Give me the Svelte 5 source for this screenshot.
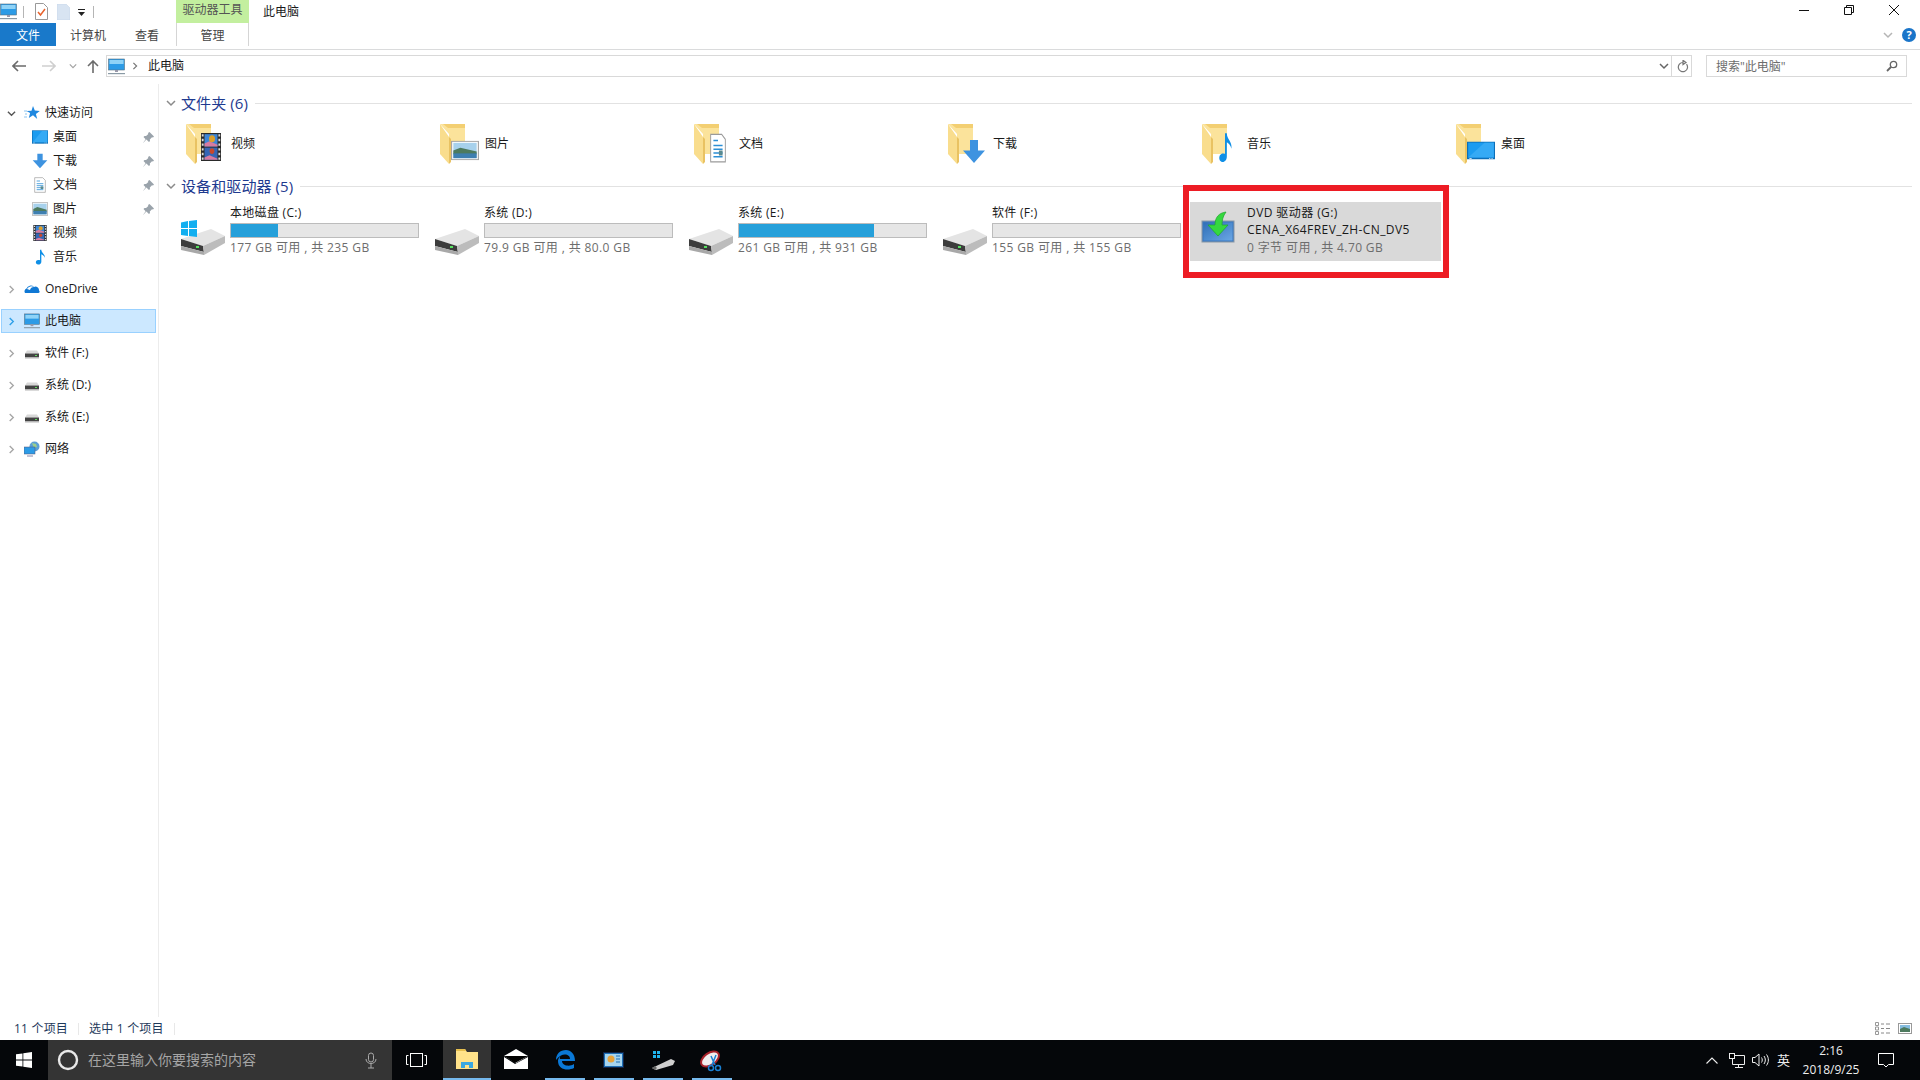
<script>
  const quick = [
    { name: '桌面', kind: 'desktop', pin: true },
    { name: '下载', kind: 'down', pin: true },
    { name: '文档', kind: 'doc', pin: true },
    { name: '图片', kind: 'pic', pin: true },
    { name: '视频', kind: 'film', pin: false },
    { name: '音乐', kind: 'note', pin: false }
  ];
  const folders = [
    { name: '视频', kind: 'film' },
    { name: '图片', kind: 'pic' },
    { name: '文档', kind: 'doc' },
    { name: '下载', kind: 'down' },
    { name: '音乐', kind: 'note' },
    { name: '桌面', kind: 'desktop' }
  ];
  const drives = [
    { name: '本地磁盘 (C:)', stat: '177 GB 可用 , 共 235 GB', used: 25, win: true },
    { name: '系统 (D:)', stat: '79.9 GB 可用 , 共 80.0 GB', used: 0 },
    { name: '系统 (E:)', stat: '261 GB 可用 , 共 931 GB', used: 72 },
    { name: '软件 (F:)', stat: '155 GB 可用 , 共 155 GB', used: 0 }
  ];
  const navDrives = ['软件 (F:)', '系统 (D:)', '系统 (E:)'];
</script>

{#snippet glyph(kind)}
  {#if kind === 'desktop'}
    <rect x="0" y="2" width="24" height="20" fill="#0d6fb8"/><rect x="1" y="3" width="22" height="17" fill="#1c9cf0"/><path d="M1 20L15 3h8v17z" fill="#35aaf5"/><path d="M2 21h2M19 21h1M21 21h1" stroke="#fff"/>
  {:else if kind === 'down'}
    <path d="M8 1h8v10h7L12 23 1 11h7z" fill="#3e93e0"/>
  {:else if kind === 'doc'}
    <path d="M4 1h12l4 4v18H4z" fill="#fff" stroke="#9a9a9a"/><path d="M7 6h5M7 10h10M7 13h10M7 16h10M7 19h10" stroke="#2d8fd5" stroke-width="1.2"/><rect x="13" y="14" width="4" height="4" fill="#5a8a90"/>
  {:else if kind === 'pic'}
    <rect x=".5" y="2.500" width="23" height="19" fill="#fff" stroke="#a6a6a6"/><rect x="2" y="4" width="20" height="16" fill="#a7d1ec"/><path d="M2 12l6-3 14 4v3H2z" fill="#4d7a5e"/><rect x="2" y="15" width="20" height="5" fill="#3e7fb0"/>
  {:else if kind === 'film'}
    <rect x="2" y="0" width="20" height="24" fill="#2a2a2a"/><rect x="5.500" y="1" width="13" height="10.500" fill="#3e86d6"/><rect x="5.500" y="12.500" width="13" height="10.500" fill="#3566b5"/><path d="M5.500 9l5-2 8 3v1.500h-13z" fill="#d77ba0"/><path d="M5.500 21l5-2 8 3v1h-13z" fill="#d77ba0"/><circle cx="13" cy="5" r="3" fill="#dca02b"/><circle cx="13" cy="15.500" r="2.400" fill="#c8482b"/><path d="M3.700 1v22M20.300 1v22" stroke="#ddd" stroke-width="1.800" stroke-dasharray="2 2"/>
  {:else if kind === 'note'}
    <path d="M12 1h2c0 5 6 6 5 12-1-3-3-4-5-5v11c0 3-3 5-6 4s-3-5 0-6c1-.5 3-.5 4 0z" fill="#0f8fe6"/>
  {/if}
{/snippet}

{#snippet icon(kind, size = 16)}
  <svg class="ic" width={size} height={size} viewBox="0 0 24 24">{@render glyph(kind)}</svg>
{/snippet}

{#snippet pc(w = 17)}
  <svg class="ic" width={w} height={w} viewBox="0 0 17 17"><rect x=".5" y="1" width="16" height="11" fill="#2c9be6" stroke="#58707f" stroke-width=".6"/><rect x="1.500" y="2" width="14" height="4" fill="#8fd3f7"/><rect x="7" y="12" width="3" height="2" fill="#99a"/><rect x="0" y="15" width="17" height="1.200" fill="#8a9aa5"/></svg>
{/snippet}

{#snippet chev(dir = 'right', color = '#a6a6a6', size = 9)}
  <svg class="ic" width={size} height={size} viewBox="0 0 10 10"><path d={dir === 'right' ? 'M3 1l4 4-4 4' : 'M1 3l4 4 4-4'} fill="none" stroke={color} stroke-width="1.500"/></svg>
{/snippet}

{#snippet smallDrive()}
  <svg class="ic" width="16" height="16" viewBox="0 0 16 16"><path d="M3 5.500h10l2 3H1z" fill="#d8d8d8"/><rect x="1" y="8.500" width="14" height="3.500" fill="#444"/><rect x="1" y="12" width="14" height="1.500" fill="#b5b5b5"/><rect x="11" y="10" width="2" height="1" fill="#5fdc5f"/></svg>
{/snippet}

{#snippet pin()}
  <svg class="pin" width="11" height="11" viewBox="0 0 11 11"><path d="M6.500 0l4.500 4.500-1 1-1-.3-2.200 2.200.2 1.600-1 1L3.400 7.500.6 10.400 0 11l2.600-3.800L.5 4.900l1-1 1.600.2 2.200-2.200-.3-1z" fill="#9aa3ab"/></svg>
{/snippet}

{#snippet folder(kind)}
  <span class="folder">
    <svg width="40" height="40" viewBox="0 0 40 40">
      <path d="M0 0h25v30H9V10z" fill="#fbe39b"/><path d="M3 0h22v4H8z" fill="#f3cf72"/>
      <path d="M0 0l9 13v27L0 30z" fill="#f9dd8d"/><path d="M9 13v27l2-2V15z" fill="#e9c262"/>
    </svg>
    <svg class="over {kind}" viewBox="0 0 24 24" preserveAspectRatio="none">{@render glyph(kind)}</svg>
  </span>
{/snippet}

{#snippet hdd(win)}
  <span class="hdd">
    <svg width="44" height="34" viewBox="0 0 44 34">
      <path d="M0 16L30 6l14 7-22 10z" fill="#e4e4e4"/>
      <path d="M0 16l22 7 1 6-23-6z" fill="#3c3c3c"/>
      <path d="M0 23l23 6v3L0 27z" fill="#a8a8a8"/>
      <path d="M22 23l22-10v7L23 32z" fill="#bcbcbc"/>
      <rect x="15" y="23" width="3" height="2" fill="#55e05f"/>
    </svg>
    {#if win}
      <svg class="win" width="16" height="17" viewBox="0 0 16 17"><path d="M0 2.500L7 1v7H0zM8 1l8-1v8H8zM0 9h7v7l-7-1zM8 9h8v8l-8-1z" fill="#12aff0"/></svg>
    {/if}
  </span>
{/snippet}

<div class="screen">
  <div class="window">
    <header class="title">
      <div class="qat">
        {@render pc(17)}
        <i class="vsep"></i>
        <svg class="ic" width="13" height="17" viewBox="0 0 13 17"><path d="M.5.500h8l4 4v12H.5z" fill="#fff" stroke="#999"/><path d="M3 9l2.500 3L10 6" fill="none" stroke="#e8622c" stroke-width="1.500"/></svg>
        <svg class="ic q2" width="13" height="16" viewBox="0 0 13 16"><path d="M0 0h9l4 4v12H0z" fill="#d8e4f2" stroke="#c3d2e4" stroke-width=".5"/></svg>
        <svg class="ic q3" width="8" height="8" viewBox="0 0 8 8"><rect y="0" width="7" height="1" fill="#222"/><path d="M0 3h7L3.500 7z" fill="#222"/></svg>
        <i class="vsep s2"></i>
      </div>
      <div class="ctx">驱动器工具</div>
      <div class="wintitle">此电脑</div>
      <div class="winbtns">
        <svg class="ic" width="12" height="12" viewBox="0 0 12 12"><path d="M1 6.500h10" stroke="#111"/></svg>
        <svg class="ic" width="12" height="12" viewBox="0 0 12 12"><path d="M1.500 3.500h7v7h-7zM3.500 3.500v-2h7v7h-2" fill="none" stroke="#111"/></svg>
        <svg class="ic" width="12" height="12" viewBox="0 0 12 12"><path d="M1 1l10 10M11 1L1 11" stroke="#111"/></svg>
      </div>
    </header>

    <nav class="tabs">
      <div class="tab file">文件</div>
      <div class="tab comp">计算机</div>
      <div class="tab view">查看</div>
      <div class="tab manage">管理</div>
      <div class="tabend">
        {@render chev('down', '#b5b5b5', 10)}
        <span class="help">?</span>
      </div>
    </nav>

    <div class="addr">
      <div class="navbtns">
        <svg class="ic" width="14" height="12" viewBox="0 0 14 12"><path d="M6 1L1 6l5 5M1 6h13" fill="none" stroke="#6b6b6b" stroke-width="1.600"/></svg>
        <svg class="ic fw" width="14" height="12" viewBox="0 0 14 12"><path d="M8 1l5 5-5 5M13 6H0" fill="none" stroke="#cfcfcf" stroke-width="1.600"/></svg>
        <span class="dd">{@render chev('down', '#a3a3a3', 8)}</span>
        <svg class="ic up" width="12" height="13" viewBox="0 0 12 13"><path d="M1 6l5-5 5 5M6 1v12" fill="none" stroke="#6b6b6b" stroke-width="1.600"/></svg>
      </div>
      <div class="path">
        {@render pc(17)}
        <span class="crumb">{@render chev('right', '#777', 8)}</span>
        <span class="pathtext">此电脑</span>
        <span class="pathdd">{@render chev('down', '#666', 10)}</span>
        <span class="refresh"><svg class="ic" width="12" height="13" viewBox="0 0 12 13"><path d="M9.500 4.200a4.600 4.600 0 1 1-3.400-1.700M6 .3v4.200L9 2.400z" fill="none" stroke="#777" stroke-width="1.200"/></svg></span>
      </div>
      <div class="search">
        <span class="stext">搜索"此电脑"</span>
        <svg class="ic" width="12" height="12" viewBox="0 0 12 12"><circle cx="7.500" cy="4.500" r="3.200" fill="none" stroke="#666" stroke-width="1.300"/><path d="M5 7l-4 4" stroke="#666" stroke-width="1.800"/></svg>
      </div>
    </div>

    <div class="body">
      <aside class="side">
        <div class="row">
          <span class="arrow">{@render chev('down', '#555')}</span>
          <svg class="ic" width="16" height="16" viewBox="0 0 16 16"><path d="M9 1l1.800 4.600 5 .3-3.900 3.100 1.300 4.900L9 10.200l-4.200 2.700 1.300-4.900L2.500 6l5-.3z" fill="#1f88e0"/><path d="M0 6h3M1 9h2M0 12h3" stroke="#8cc4ef"/></svg>
          <span class="lbl">快速访问</span>
        </div>
        {#each quick as q}
          <div class="row sub">
            {@render icon(q.kind)}
            <span class="lbl">{q.name}</span>
            {#if q.pin}{@render pin()}{/if}
          </div>
        {/each}
        <div class="row gap">
          <span class="arrow">{@render chev()}</span>
          <svg class="ic" width="16" height="16" viewBox="0 0 16 16"><path d="M1 12a3 3 0 0 1 1.500-4.500A4.500 4.500 0 0 1 10 6a3.500 3.500 0 0 1 5 3.500c1 .8.800 2.500-.5 2.500z" fill="#0f78d4"/><path d="M3 8a5 5 0 0 1 7-2 4 4 0 0 0-4 3z" fill="#fff"/></svg>
          <span class="lbl">OneDrive</span>
        </div>
        <div class="row gap active">
          <span class="arrow">{@render chev('right', '#2d9fe8')}</span>
          {@render pc(16)}
          <span class="lbl">此电脑</span>
        </div>
        {#each navDrives as d}
          <div class="row gap">
            <span class="arrow">{@render chev()}</span>
            {@render smallDrive()}
            <span class="lbl">{d}</span>
          </div>
        {/each}
        <div class="row gap">
          <span class="arrow">{@render chev()}</span>
          <svg class="ic" width="16" height="16" viewBox="0 0 16 16"><circle cx="10.500" cy="5.500" r="5" fill="#5b9fd6"/><path d="M8 2l4 1 1 3-3 1z" fill="#9ccf8a"/><rect x="0" y="6" width="11" height="7" fill="#2c9be6" stroke="#557" stroke-width=".5"/><path d="M3 15h6" stroke="#88a"/></svg>
          <span class="lbl">网络</span>
        </div>
      </aside>

      <main class="content">
        <div class="ghead">
          <span class="gchev">{@render chev('down', '#8a8a8a', 10)}</span>
          <span class="gname">文件夹 (6)</span>
          <i></i>
        </div>
        <div class="grid folders">
          {#each folders as f}
            <div class="fitem">
              {@render folder(f.kind)}
              <span>{f.name}</span>
            </div>
          {/each}
        </div>
        <div class="ghead">
          <span class="gchev">{@render chev('down', '#8a8a8a', 10)}</span>
          <span class="gname">设备和驱动器 (5)</span>
          <i></i>
        </div>
        <div class="grid">
          {#each drives as d}
            <div class="ditem">
              {@render hdd(d.win)}
              <div class="dtext">
                <div class="dname">{d.name}</div>
                <div class="bar"><div class="fill" style="width:{d.used}%"></div></div>
                <div class="dstat">{d.stat}</div>
              </div>
            </div>
          {/each}
          <div class="ditem sel">
            <svg class="dvd" width="35" height="33" viewBox="0 0 35 33">
              <defs><linearGradient id="dv" x1="0" y1="0" x2="1" y2="1"><stop offset="0" stop-color="#2f6fb8"/><stop offset="1" stop-color="#6aa6e4"/></linearGradient></defs>
              <rect x="1" y="10" width="32" height="21" fill="#3a78c0" stroke="#8a98a5"/><rect x="2.500" y="11.500" width="29" height="18" fill="url(#dv)"/>
              <path d="M25 1c-7 1-11 5-11 13H7l10 11 10-11h-6c0-5 1-9 4-13z" fill="#35d83f" stroke="#1ea52c" stroke-width=".7"/>
            </svg>
            <div class="dtext">
              <div class="dname">DVD 驱动器 (G:)</div>
              <div class="dname">CENA_X64FREV_ZH-CN_DV5</div>
              <div class="dstat">0 字节 可用 , 共 4.70 GB</div>
            </div>
            <div class="redbox"></div>
          </div>
        </div>
      </main>
    </div>

    <footer class="status">
      <span class="s1">11 个项目</span><i></i>
      <span class="s2t">选中 1 个项目</span><i></i>
      <div class="views">
        <svg class="ic" width="16" height="13" viewBox="0 0 16 13"><path d="M.5.500h3v3h-3zM.5 5h3v3h-3zM.5 9.500h3v3h-3z" fill="none" stroke="#999"/><path d="M6 2h3M11 2h4M6 6.500h3M11 6.500h4M6 11h3M11 11h4" stroke="#888"/></svg>
        <svg class="ic" width="14" height="11" viewBox="0 0 14 11"><rect x=".5" y=".5" width="13" height="10" fill="#fff" stroke="#999"/><rect x="2" y="2" width="10" height="7" fill="#86bde0"/><path d="M2 6l4-2 6 2v3H2z" fill="#4d7a5e"/></svg>
      </div>
    </footer>
  </div>

  <div class="taskbar">
    <div class="start">
      <svg width="16" height="16" viewBox="0 0 16 16"><path d="M0 2.300L6.500 1.400v6.200H0zM7.300 1.300L16 0v7.600H7.300zM0 8.400h6.500v6.200L0 13.700zM7.300 8.400H16V16l-8.700-1.300z" fill="#fff"/></svg>
    </div>
    <div class="cortana">
      <svg width="22" height="22" viewBox="0 0 22 22"><circle cx="11" cy="11" r="9" fill="none" stroke="#e8e8e8" stroke-width="2.400"/></svg>
      <span class="ctext">在这里输入你要搜索的内容</span>
      <svg class="mic" width="12" height="17" viewBox="0 0 12 17"><rect x="3.500" y="1" width="5" height="9" rx="2.500" fill="none" stroke="#aaa"/><path d="M1 7c0 6 10 6 10 0M6 12v4M3 16h6" fill="none" stroke="#aaa"/></svg>
    </div>
    <div class="tv">
      <svg width="21" height="14" viewBox="0 0 21 14"><rect x="4.500" y=".5" width="12" height="13" fill="none" stroke="#fff"/><path d="M2.500 2.500H.5v9h2M18.500 2.500h2v9h-2" fill="none" stroke="#fff"/></svg>
    </div>
    <div class="tile on">
      <svg width="22" height="20" viewBox="0 0 22 20"><path d="M0 0h9l2 3h11v17H0z" fill="#ffe28a"/><path d="M0 0h9l1 2H0z" fill="#e6bf4f"/><path d="M5 19v-6h12v6h-4v-3H9v3z" fill="#3aa7e0"/></svg>
    </div>
    <div class="tile">
      <svg width="24" height="20" viewBox="0 0 24 20"><path d="M0 7L12 0l12 7-12 7z" fill="#fff"/><path d="M0 8l11 7 13-7v12H0z" fill="#fff"/><path d="M0 7l24 0-13 7z" fill="#000"/></svg>
    </div>
    <div class="tile under">
      <svg width="20" height="20" viewBox="0 0 20 20"><path d="M1 10C1 4 5 0 11 0c5 0 9 4 9 11H7c0 5 8 6 12 3v4c-6 3-16 2-16-7 0-2 1-4 3-5-1.500 1-1 3-1 3h10c0-5-8-7-14 1z" fill="#0a78d7"/></svg>
    </div>
    <div class="tile under">
      <svg width="21" height="16" viewBox="0 0 21 16"><rect x=".5" y=".5" width="20" height="15" fill="#1d6fb5" stroke="#124"/><rect x="2" y="2" width="17" height="12" fill="#a6d4ee"/><circle cx="8" cy="7" r="3.500" fill="#e8a33a"/><path d="M13 4h4M13 7h4M13 10h4" stroke="#1d6fb5"/></svg>
    </div>
    <div class="tile under">
      <svg width="24" height="22" viewBox="0 0 24 22"><path d="M2 2h3v3H2zM6 2h3v3H6zM2 6h3v3H2zM6 6h3v3H6z" fill="#1fb4ec"/><path d="M1 19L20 10l4 2-2 4-17 5z" fill="#cfcfcf"/><path d="M1 19l3 2 2-2-2-2z" fill="#666"/></svg>
    </div>
    <div class="tile under">
      <svg width="23" height="23" viewBox="0 0 23 23"><ellipse cx="10" cy="10" rx="10" ry="6" transform="rotate(-35 10 10)" fill="#f0eeee" stroke="#a8222a" stroke-width="2"/><path d="M11 7l4 9M16 6l-4 10" stroke="#1a7fd1" stroke-width="1.500"/><circle cx="11" cy="19" r="2.500" fill="none" stroke="#1a7fd1" stroke-width="1.500"/><circle cx="18" cy="19" r="2.500" fill="none" stroke="#1a7fd1" stroke-width="1.500"/></svg>
    </div>
    <div class="tray">
      <svg class="trayup" width="12" height="7" viewBox="0 0 12 7"><path d="M.5 6.500L6 1l5.500 5.500" fill="none" stroke="#eee" stroke-width="1.100"/></svg>
      <svg width="16" height="15" viewBox="0 0 16 15"><path d="M3.500 2.500h12v9h-12zM6 14.500h8M9.500 11.500v3" fill="none" stroke="#eee"/><rect x=".5" y=".5" width="5" height="5" fill="#000" stroke="#eee"/></svg>
      <svg width="17" height="14" viewBox="0 0 17 14"><path d="M.5 4.500h2.500L7 1v12L3 9.500H.5zM9.500 4.500c1 1.500 1 3.500 0 5M12 3c1.800 2.500 1.800 5.500 0 8M14.500 1.500c2.500 3.500 2.500 7.500 0 11" fill="none" stroke="#eee"/></svg>
      <span class="ime">英</span>
      <div class="clock"><span>2:16</span><span>2018/9/25</span></div>
      <svg class="bubble" width="16" height="15" viewBox="0 0 16 15"><path d="M.5.500h15v11h-5l-2.500 2.500L5.500 11.500h-5z" fill="none" stroke="#fff"/></svg>
    </div>
  </div>
</div>

<style>
  :global(body) { margin: 0; background: #fff; }
  .screen {
    width: 1920px; height: 1080px; display: flex; flex-direction: column; overflow: hidden;
    font: 12px/16px "Open Sans", "Noto Sans CJK SC", sans-serif; color: #1a1a1a; background: #fff;
  }
  .ic { display: block; flex: none; }
  i { display: block; font-style: normal; }
  .window { flex: 1; display: flex; flex-direction: column; min-height: 0; }

  .title { height: 23px; display: flex; align-items: center; flex: none; }
  .qat { width: 176px; display: flex; align-items: center; height: 23px; flex: none; }
  .vsep { width: 1px; height: 12px; background: #b5b5b5; margin: 0 11px 0 6px; }
  .q2 { margin-left: 9px; }
  .q3 { margin: 2px 0 0 8px; }
  .vsep.s2 { margin-left: 7px; }
  .ctx { width: 73px; height: 23px; background: #c3ef9f; text-align: center; line-height: 20px; color: #555; flex: none; }
  .wintitle { margin-left: 14px; }
  .winbtns { margin-left: auto; display: flex; gap: 33px; padding: 0 20px 3px 0; }

  .tabs { height: 23px; display: flex; flex: none; align-items: stretch; line-height: 25px; color: #444; }
  .tab { text-align: center; }
  .file { width: 56px; background: #1979ca; color: #fff; }
  .comp { margin-left: 14px; width: 36px; }
  .view { margin-left: 29px; width: 24px; }
  .manage { margin-left: 17px; width: 71px; border: solid #d5d5d5; border-width: 0 1px; }
  .tabend { margin-left: auto; display: flex; align-items: center; gap: 9px; padding-right: 4px; }
  .help { width: 14px; height: 14px; border-radius: 50%; background: #1a75c9; color: #fff; font-weight: 700; font-size: 11px; line-height: 14px; text-align: center; }

  .addr { flex: none; height: 35px; margin-top: 3px; border-top: 1px solid #dadbdc; display: flex; align-items: center; padding: 0 13px 2px 0; box-sizing: border-box; }
  .navbtns { width: 106px; display: flex; align-items: center; padding-left: 12px; box-sizing: border-box; flex: none; }
  .fw { margin-left: 16px; }
  .dd { margin-left: 13px; }
  .up { margin-left: 10px; }
  .path { flex: 1; height: 22px; box-sizing: border-box; border: 1px solid #d9d9d9; display: flex; align-items: center; padding-left: 1px; }
  .crumb { margin-left: 6px; }
  .pathtext { margin-left: 9px; }
  .pathdd { margin-left: auto; margin-right: 2px; }
  .refresh { width: 20px; height: 20px; box-sizing: border-box; padding-left: 3px; border-left: 1px solid #d9d9d9; display: flex; align-items: center; justify-content: center; }
  .search { width: 201px; height: 22px; margin-left: 14px; box-sizing: border-box; border: 1px solid #d9d9d9; display: flex; align-items: center; justify-content: space-between; padding: 0 8px 0 9px; color: #6d6d6d; flex: none; }
  .stext { padding-top: 2px; }

  .body { flex: 1; display: flex; min-height: 0; }
  .side { width: 159px; box-sizing: border-box; border-right: 1px solid #ececec; padding: 17px 2px 0 1px; flex: none; }
  .row { height: 24px; display: flex; align-items: center; }
  .arrow { width: 21px; margin-right: 2px; display: flex; justify-content: center; flex: none; }
  .lbl { margin-left: 5px; white-space: nowrap; }
  .sub { padding-left: 31px; }
  .pin { margin-left: auto; margin-right: 2px; }
  .gap { margin-top: 8px; }
  .active { background: #cce8ff; box-shadow: inset 0 0 0 1px #99d1ff; }

  .content { flex: 1; min-width: 0; padding: 7px 8px 0 15px; }
  .ghead { height: 24px; display: flex; align-items: center; }
  .gchev { margin-left: -8px; width: 15px; flex: none; }
  .gname { font-size: 15px; color: #1e3a8f; white-space: nowrap; letter-spacing: .1px; }
  .ghead i { flex: 1; height: 1px; background: #e2e2e2; margin-left: 7px; }
  .grid { display: grid; grid-template-columns: repeat(6, 254px); }
  .folders { height: 59px; box-sizing: border-box; padding-bottom: 2px; align-items: center; }
  .fitem { display: flex; align-items: center; padding-left: 12px; height: 48px; }
  .folder { position: relative; width: 45px; flex: none; height: 40px; }
  .folder svg { display: block; }
  .over { position: absolute; }
  .over.film { left: 13px; top: 9px; width: 24px; height: 28px; }
  .over.pic { left: 11px; top: 15px; width: 28px; height: 23px; }
  .over.doc { left: 13px; top: 9px; width: 22px; height: 30px; }
  .over.down { left: 14px; top: 15px; width: 24px; height: 25px; }
  .over.note { left: 12px; top: 8px; width: 22px; height: 31px; }
  .over.desktop { left: 11px; top: 16px; width: 28px; height: 21px; }
  .ditem { width: 251px; height: 59px; margin-top: 4px; display: flex; position: relative; box-sizing: border-box; padding: 3px 0 0 7px; }
  .hdd { width: 49px; flex: none; position: relative; }
  .hdd svg { position: absolute; left: 0; top: 18px; display: block; }
  .hdd .win { top: 15px; }
  .dtext { width: 195px; flex: none; white-space: nowrap; }
  .dname { height: 16px; letter-spacing: .3px; }
  .bar { height: 15px; width: 189px; box-sizing: border-box; margin-top: 2px; background: #e6e6e6; border: 1px solid #bcbcbc; }
  .fill { height: 100%; background: #26a0da; }
  .dstat { color: #6d6d6d; height: 16px; margin-top: 2px; letter-spacing: .38px; }
  .sel { background: #d9d9d9; }
  .sel .dname { height: 17px; letter-spacing: .42px; }
  .sel .dstat { margin-top: 1px; }
  .dvd { flex: none; margin: 6px 11px 0 4px; display: block; }
  .redbox { position: absolute; inset: -17px -8px -17px -7px; border: 6px solid #ed1c24; pointer-events: none; }

  .status { flex: none; height: 23px; display: flex; align-items: center; color: #1e395b; padding-right: 8px; letter-spacing: .2px; }
  .s1 { margin-left: 14px; }
  .s2t { margin-left: 10px; }
  .status i { width: 1px; height: 12px; background: #e8e8e8; margin-left: 10px; }
  .views { margin-left: auto; display: flex; gap: 7px; align-items: center; }

  .taskbar { flex: none; height: 40px; background: #05070a; display: flex; align-items: center; color: #fff; }
  .start { width: 48px; display: flex; justify-content: center; flex: none; }
  .cortana { width: 344px; height: 40px; background: #343434; display: flex; align-items: center; padding: 0 15px 0 9px; box-sizing: border-box; flex: none; }
  .ctext { margin-left: 9px; font-size: 14px; color: #a5a5a5; flex: 1; }
  .tv { width: 51px; box-sizing: border-box; padding-right: 2px; display: flex; justify-content: center; flex: none; }
  .tile { width: 49px; height: 40px; display: flex; align-items: center; justify-content: center; box-sizing: border-box; flex: none; border-bottom: 2px solid transparent; }
  .on { width: 48px; background: #333; border-bottom-color: #76b9ed; }
  .under { background: linear-gradient(#76b9ed, #76b9ed) center bottom / 40px 2px no-repeat; border-bottom: 0; }
  .tray { margin-left: auto; display: flex; align-items: center; gap: 7px; color: #eee; }
  .trayup { margin-right: 4px; }
  .ime { font-size: 13px; margin-left: 1px; }
  .clock { display: flex; flex-direction: column; align-items: center; width: 68px; font-size: 12px; line-height: 19px; }
  .bubble { margin: 0 26px 0 6px; }
</style>
